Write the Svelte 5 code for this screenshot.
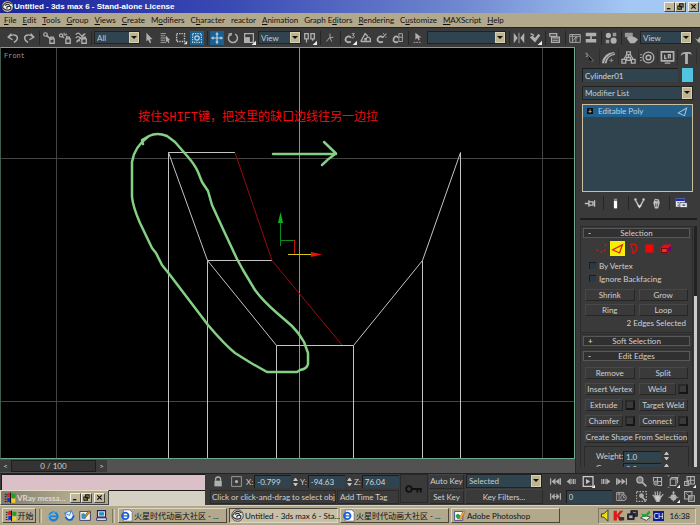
<script>
  const menus = [
    ['', 'F', 'ile'], ['', 'E', 'dit'], ['', 'T', 'ools'], ['', 'G', 'roup'], ['', 'V', 'iews'],
    ['', 'C', 'reate'], ['M', 'o', 'difiers'], ['C', 'h', 'aracter'], ['reactor', '', ''],
    ['', 'A', 'nimation'], ['Graph E', 'd', 'itors'], ['', 'R', 'endering'], ['C', 'u', 'stomize'],
    ['', 'M', 'AXScript'], ['', 'H', 'elp']
  ];

  // inner markup of the 16x16 icons
  const icons = {
    undo: '<path d="M6 3 2.500 7l5 3M3 7c4-4 10-3 10 1 0 2-2 4-4 5" fill="none" stroke="currentColor" stroke-width="1.600"/>',
    redo: '<path d="m10 3 3.500 4-5 3M13 7C9 3 3 4 3 8c0 2 2 4 4 5" fill="none" stroke="currentColor" stroke-width="1.600"/>',
    link: '<circle cx="4" cy="4" r="2" fill="none" stroke="currentColor" stroke-width="1.400"/><path d="m5 5 6 5" stroke="currentColor" stroke-width="1.700"/><path d="M9 9h5v5H9zM10 9V7h3v2" fill="none" stroke="currentColor" stroke-width="1.500"/>',
    unlink: '<circle cx="3.500" cy="5" r="1.800" fill="none" stroke="currentColor" stroke-width="1.400"/><path d="m5 6 2 2M7 2v3M10 3 8 5M11 6H9" stroke="currentColor" stroke-width="1.300"/><path d="M9 9h5v5H9zM10 9V7h3v2" fill="none" stroke="currentColor" stroke-width="1.500"/>',
    bind: '<path d="M2 4q3-3 5 0t6-1M2 8q3-3 5 0t6-1M3 12q2-3 4 0" fill="none" stroke="currentColor" stroke-width="1.500"/><path d="m3 13 9-10" stroke="currentColor" stroke-width="1.400"/><path d="M9 9h5v5H9zM10 9V7h3v2" fill="none" stroke="currentColor" stroke-width="1.500"/>',
    cursor: '<path d="M5 2v10l2-2 2 4 1.500-1L9 9.500h3z" fill="currentColor"/>',
    byname: '<path d="M3 3h6M3 5.500h5M3 8h6M3 10.500h5M3 13h6" stroke="currentColor"/><path d="M9 5v8l1.500-1.500 1.500 2.500 1-1-1-2.500h2z" fill="currentColor"/>',
    region: '<path d="M3 3h9v9H3z" fill="none" stroke="#ccc" stroke-width="1.600" stroke-dasharray="1.500 1.300"/><path d="M15 11v4h-4z" fill="#ddd"/>',
    window: '<path d="M3 3h10v10H3z" fill="none" stroke="currentColor" stroke-width="1.400" stroke-dasharray="1.500 1.200"/><circle cx="8" cy="8" r="2.500" fill="none" stroke="currentColor" stroke-width="1.400"/>',
    move: '<path d="M8 1 6 4h4zM8 15l-2-3h4zM1 8l3-2v4zM15 8l-3-2v4zM7.300 4h1.400v8H7.300zM4 7.300h8v1.400H4z" fill="currentColor"/>',
    rotate: '<path d="M10.500 3.500a5.200 5.200 0 1 1-6 .6" fill="none" stroke="currentColor" stroke-width="1.700"/><path d="m2 3 5-1-1 4z" fill="currentColor"/>',
    scale: '<path d="M3 3h10v10H3z" fill="none" stroke="currentColor" stroke-width="1.400"/><path d="M3 7h6v6H3z" fill="currentColor"/><path d="M16 11v5h-5z" fill="#eee"/>',
    pivot: '<path d="M2 3h4v6H2zM9 3h4v6H9z" fill="none" stroke="currentColor" stroke-width="1.500"/><path d="M4 9v4M11 9v2" stroke="currentColor" stroke-width="1.500"/><path d="M16 11v5h-5z" fill="#eee"/>',
    manip: '<path d="m4 12 3-4 5-1M8 3v5l2 4" fill="none" stroke="currentColor"/>',
    snap3: '<path d="M9 12c-3 2-7 0-6-3s5-4 6-1" fill="none" stroke="currentColor" stroke-width="2"/><path d="M10 3h3l-2 2q2 0 2 1.500T10 8" fill="none" stroke="currentColor"/><path d="M16 11v5h-5z" fill="#eee"/>',
    snapA: '<path d="m2 12 5-9 3 3M2 12h11V9q-3-4-5 0" fill="none" stroke="currentColor" stroke-width="1.500"/><path d="M6 8h3v3H6z" fill="currentColor"/>',
    snapP: '<path d="M9 12c-3 2-7 0-6-3s5-4 6-1" fill="none" stroke="currentColor" stroke-width="2"/><path d="m9 7 4-4M9 3h1M12 7h1" stroke="currentColor" stroke-width="1.300"/>',
    snapS: '<path d="M8 12c-3 2-6 0-5-3s4-4 5-1" fill="none" stroke="currentColor" stroke-width="2"/><path d="M9 3h4v9H9zM9 7h4" fill="none" stroke="currentColor"/>',
    named: '<path d="M5 2v8l2-2 2 3 1-1-1-2.500h3z" fill="currentColor"/><path d="M3 13h9" stroke="currentColor" stroke-dasharray="2 1"/>',
    mirror: '<path d="M2 2v12l4.500-6zM14 2v12L9.500 8z" fill="currentColor"/><path d="M8 2v12" stroke="currentColor"/>',
    align: '<path d="m2 7 3-2 3 3 4-5 2 2-6 8z" fill="currentColor"/><path d="m3 3 4 2" stroke="currentColor" stroke-width="1.500"/><path d="M16 11v5h-5z" fill="#eee"/>',
    layers: '<path d="M2 3h8v3H2zM4 7h9v6H4z" fill="none" stroke="currentColor" stroke-width="1.400"/><path d="M5 9h7M5 11h7" stroke="currentColor"/>',
    curve: '<path d="M2 4h12v9H2zM2 6h12M5 4v9M9 6v7" fill="none" stroke="currentColor"/><path d="M6 11q2-5 5-3" fill="none" stroke="currentColor"/>',
    schem: '<path d="M2 2h12v4H2zM2 9h12v4H2z" fill="currentColor"/><path d="M8 6v3" stroke="currentColor" stroke-width="2"/>',
    material: '<circle cx="5" cy="5" r="3" fill="currentColor"/><path d="M10 2h4v4h-4zM2 10h4v4H2z" fill="currentColor" opacity=".8"/><circle cx="11" cy="11" r="3.500" fill="currentColor"/>',
    teapot: '<path d="M1 2h9v5H1z" fill="currentColor" opacity=".8"/><path d="M3 8q5-4 11 0l2 2-4 4H7z" fill="currentColor"/>',
    quick: '<path d="m1 8 3 2 4-5 5 3-3 5H5z" fill="currentColor"/>',
    create: '<path d="m4 3 8 9M6 6l5 6M4 7l3-1" stroke="#858585" stroke-width="1.500"/><path d="m6 5 6 7-4-1z" fill="#111"/>',
    modify: '<path d="M1 14Q2 3 14 2l1 3Q7 6 6 14z" fill="currentColor"/><path d="M3.500 14Q5 6 14 3.500" fill="none" stroke="#555"/><path d="M11 9v4M9 11h4" stroke="#999"/>',
    hier: '<path d="M6 2h4v3H6zM1 10h4v4H1zM11 10h4v4h-4zM6 8h4v3H6z" fill="none" stroke="currentColor" stroke-width="1.400"/><path d="m6 5-3 5M10 5l3 5M8 5v3" stroke="currentColor" stroke-width="1.300"/>',
    motion: '<circle cx="9" cy="8" r="5.800" fill="none" stroke="currentColor" stroke-width="1.300"/><circle cx="9" cy="8" r="2.500" fill="none" stroke="currentColor" stroke-width="1.600"/><path d="M0 5h2M0 8h2M0 11h2" stroke="currentColor"/>',
    display: '<path d="M1.500 2h13v9.500h-13z" fill="#333" stroke="currentColor" stroke-width="1.800"/><path d="M5 14h6M5 5v4h2M9 9V5h2v4" fill="none" stroke="currentColor" stroke-width="1.500"/>',
    hammer: '<path d="M2 5q1-3 5-3h5l2 3-3-1H9.500v11h-3V4Q4 4 2 6z" fill="currentColor"/>',
    pin: '<path d="M1 8h5M6 4v8M6 6h5v4H6M13 4v8" fill="none" stroke="currentColor" stroke-width="1.600"/>',
    tube: '<path d="M6 2h4v3H6z" fill="#888"/><path d="M6 5h4v9H6z" fill="#fff"/>',
    unique: '<path d="m3 4 4 7M13 4 9 11" stroke="currentColor" stroke-width="1.800"/><path d="M5 10h6l-3 4z" fill="#ddd"/><circle cx="3" cy="3" r="1.600" fill="currentColor"/><circle cx="13" cy="3" r="1.600" fill="currentColor"/>',
    trash: '<path d="m6 2 5 1 1 4H4zM4 7h8l-2 7H6z" fill="currentColor"/><path d="M7 8v4M9 8v4M6 4l4 1" stroke="#444"/>',
    config: '<path d="M1 2h11v10H1z" fill="#eee"/><path d="M1 2h11v3H1z" fill="#1a2cc8"/><path d="M3 7h2M3 10h2" stroke="#222"/><path d="M6 7h9v6H6z" fill="#fff" stroke="#335"/><path d="M8 10h5M11 8.500v3" stroke="#335"/>',
    vertex: '<g fill="#e01010"><circle cx="3" cy="10" r="1.200"/><circle cx="8" cy="12" r="1.200"/><circle cx="13" cy="4" r="1.200"/><circle cx="12" cy="10" r="1.200"/></g>',
    edge: '<path d="m2 9.500 12-6-3.500 10z" fill="none" stroke="#e02010" stroke-width="1.600"/>',
    border: '<path d="M5 3q7-1.500 7 4 0 6-5 7-1-2 1-3-3-3-3-8z" fill="none" stroke="#e01010" stroke-width="1.500"/>',
    poly: '<path d="M3 3h10v10H3z" fill="#f00808"/>',
    element: '<path d="m2 7 4-4h9v6l-3 4H2z" fill="#e01010"/><path d="M3 8h7v5H3z" fill="#f03030" stroke="#600"/><path d="m11 8 4-4v5l-3 4z" fill="#607"/>',
    lock: '<path d="M3 7h9v7H3z" fill="currentColor"/><path d="M4.500 7V4q3-3 6 0v3" fill="none" stroke="currentColor" stroke-width="1.600"/>',
    center: '<path d="M2 2h12v12H2z" fill="none" stroke="currentColor"/><circle cx="8" cy="8" r="2" fill="currentColor"/>',
    key: '<circle cx="3.500" cy="8" r="2.500" fill="none" stroke="#111" stroke-width="1.600"/><path d="M6 8h9M11 8v3M14 8v3" stroke="#111" stroke-width="1.700"/>',
    first: '<path d="M2 4v8M14 4v8" stroke="currentColor" stroke-width="1.500"/><path d="M8 4v8L3 8zM13 4v8L8 8z" fill="currentColor"/>',
    prev: '<path d="M7 4v8L2 8z" fill="currentColor"/><path d="M8.500 5v6M10.500 5v6M12.500 5v6" stroke="currentColor" stroke-width="1.300"/>',
    play: '<path d="M1.500 2h12v12h-12z" fill="none" stroke="#ccc" stroke-width="1.500"/><path d="M5 5v6l5-3z" fill="#ccc"/><path d="M16 12v4h-4z" fill="#eee"/>',
    next: '<path d="M9 4v8l5-4z" fill="currentColor"/><path d="M7.500 5v6M5.500 5v6M3.500 5v6" stroke="currentColor" stroke-width="1.300"/>',
    last: '<path d="M2 4v8M14 4v8" stroke="currentColor" stroke-width="1.500"/><path d="M8 4v8l5-4zM3 4v8l5-4z" fill="currentColor"/>',
    keymode: '<path d="M2 4v8M14 4v8" stroke="currentColor" stroke-width="1.500"/><path d="M3 8l4-4v8zM13 8 9 4v8z" fill="currentColor"/><path d="M6 8h4" stroke="currentColor"/>',
    timecfg: '<path d="M2 3h9v10H2zM2 5h9M5 3v10" fill="none" stroke="currentColor"/><circle cx="10.500" cy="9.500" r="3.500" fill="#444" stroke="currentColor"/><path d="M10.500 7.500v2h2" fill="none" stroke="currentColor"/>',
    zoom: '<circle cx="6" cy="6" r="3.800" fill="#777" stroke="currentColor" stroke-width="1.500"/><path d="m9 9 5 5" stroke="currentColor" stroke-width="2"/>',
    zoomall: '<path d="M3 8V3h10v10H8M8 3v8M4 8h9" fill="none" stroke="currentColor" stroke-width="1.300"/><circle cx="6" cy="10" r="2.600" fill="#777" stroke="currentColor"/>',
    extents: '<path d="M4 5h7v8H4zM4 5l2-2h7l-2 2M13 3v7" fill="none" stroke="currentColor" stroke-width="1.300"/><path d="M1 1h2M1 15h2M15 1h-1" stroke="currentColor"/><path d="M16 12v4h-4z" fill="#eee"/>',
    extall: '<path d="M5 2h9v9H5zM9.500 2v9M5 6.500h9M2 8v5h5V8z" fill="none" stroke="currentColor" stroke-width="1.300"/><path d="M16 12v4h-4z" fill="#eee"/>',
    zregion: '<path d="M2 2h12v12H2z" fill="none" stroke="currentColor" stroke-width="1.300" stroke-dasharray="2 1.500"/><circle cx="8" cy="7" r="3" fill="#aaa"/><path d="m9 9 4 4" stroke="currentColor" stroke-width="2"/>',
    pan: '<path d="M4 8 2 6M5.500 7 5 2M8 7V1.500M10.500 7l1-5M12 9l3-4M4 8l1-1h6l1 2-2 5H7z" fill="#ccc" stroke="currentColor" stroke-width="1.500"/>',
    arc: '<path d="M2 9h12M8 3v11" stroke="currentColor" stroke-width="1.200"/><circle cx="8" cy="9" r="3.800" fill="currentColor"/><path d="m8 1 2 3H6z" fill="currentColor"/><path d="M16 12v4h-4z" fill="#eee"/>',
    minmax: '<path d="M2 2h9v9H2zM7 7h7v7H7z" fill="none" stroke="currentColor" stroke-width="1.300"/><path d="m4 4 5 5M9 6v3H6" fill="none" stroke="currentColor"/>',
    max: '<circle cx="8" cy="8" r="7" fill="#eee" stroke="#222"/><path d="M13 5Q8 1 4 5t0 6q4 3 8 0V8H8q-2 2 0 2M5 7q3-3 6 0" fill="none" stroke="#333" stroke-width="1.500"/>',
    win: '<path d="M4 3q2-1.500 4 0v5Q6 6.500 4 8z" fill="#e02020"/><path d="M9 3q3 1 5 0v5q-2 1-5 0z" fill="#20a020"/><path d="M4 9q2-1.500 4 0v5q-2-1.500-4 0z" fill="#2030d0"/><path d="M9 9q3 1 5 0v5q-2 1-5 0z" fill="#f0d020"/><path d="M1 4h2M1 7h2M1 10h2M1 13h2M3 5h1M8 2v13" stroke="#111" stroke-width="1.200"/>',
    ie: '<circle cx="8" cy="9" r="5" fill="none" stroke="#1a7fd8" stroke-width="2.600"/><path d="M4 9h9" stroke="#1a7fd8" stroke-width="2"/><path d="M1 14Q0 9 9 4q5-3 6 0" fill="none" stroke="#58b8f0" stroke-width="1.300"/>',
    outlook: '<path d="m2 5 8-3 4 8-8 4z" fill="#e8f4ff" stroke="#2878d0"/><path d="m2 5 6 3 2-6" fill="none" stroke="#2878d0"/><path d="M3 10q3 5 8 3l2-5" fill="none" stroke="#1860c8" stroke-width="2"/>',
    desk: '<path d="M1 3h13v11H1z" fill="#f4f4e0" stroke="#226"/><path d="m5 11 7-9 2 1-7 9z" fill="#d89020" stroke="#333" stroke-width=".6"/><path d="M3 6q3-2 5 1v5H3z" fill="#3a90b8"/>',
    pc: '<path d="M3 2h10v8H3z" fill="#dde" stroke="#225" stroke-width="1.300"/><path d="M5 4h6v4H5z" fill="#1890d8"/><path d="M2 11h12v3H2z" fill="#eee" stroke="#225"/>',
    page: '<path d="M4 1h8l3 3v11H4z" fill="#fff" stroke="#667"/><circle cx="6.500" cy="8.500" r="4" fill="none" stroke="#1a60d8" stroke-width="2.200"/><path d="M3 8.500h7" stroke="#1a60d8" stroke-width="1.500"/>',
    ps: '<path d="M2 3h10v11H2z" fill="#fff" stroke="#338"/><path d="M3 9q2-5 5-2t-2 6z" fill="#2ba04a"/><path d="m7 12 6-10 2 1-5 10z" fill="#f0b020" stroke="#a44" stroke-width=".6"/>',
    speaker: '<path d="M3 6h3l5-5v14L6 10H3z" fill="#f0e020" stroke="#222"/>',
    kav: '<path d="M2 2h4v5l4-5h4l-5 6 4 6H9L6 9v5H2z" fill="#e01818"/><path d="M9 10h6v4H9z" fill="#333"/>',
    net: '<path d="M6 2h8v7H6zM2 6h8v7H2z" fill="#334" stroke="#111"/><path d="M4 8h4v3H4zM9 4h3v1H9z" fill="#aac"/>',
    eject: '<path d="m2 11 5-3 7 2-5 4z" fill="#eee" stroke="#333"/><path d="M3 5q5 4 9-3l2 2q-5 8-10 5z" fill="#20a030"/>'
  };

  const grid = { v: [56, 542], h: [158, 401] };

  const toolbar = [
    ['undo', 'redo'], ['link', 'unlink', 'bind'],
    [{ options: ['All', 'Geometry', 'Shapes'], label: 'Selection filter', size: 'filter' }, 'cursor', 'byname', 'region', 'window*'],
    ['move*', 'rotate', 'scale', { options: ['View', 'Screen', 'World'], label: 'Coordinate system', size: 'coord' }, 'pivot'],
    ['manip'], ['snap3', 'snapA', 'snapP', 'snapS'],
    ['named', { options: [''], label: 'Named selection sets', size: 'sets' }],
    ['mirror', 'align'], ['layers'], ['curve', 'schem'], ['material'],
    ['teapot', { options: ['View', 'Selected'], label: 'Render type', size: 'render' }, 'quick']
  ];

  const tabs = ['create', 'modify', 'hier', 'motion', 'display', 'hammer'];
  const levels = ['vertex', 'edge', 'border', 'poly', 'element'];
  const edits = [
    { t: 'Remove' }, { t: 'Split' },
    { t: 'Insert Vertex' }, { t: 'Weld', box: true },
    { t: 'Extrude', box: true }, { t: 'Target Weld' },
    { t: 'Chamfer', box: true }, { t: 'Connect', box: true }
  ];
  const playback = ['first', 'prev', 'play', 'next', 'last'];
  const nav = ['zoom', 'zoomall', 'extents', 'extall', 'zregion', 'pan', 'arc', 'minmax'];
  const coords = [['X:', '-0.799'], ['Y:', '-94.63'], ['Z:', '76.04']];
  const tasks = [
    { icon: 'page', t: '火星时代动画大社区 - ...' },
    { icon: 'max', t: 'Untitled - 3ds max 6 - Sta...', on: true },
    { icon: 'page', t: '火星时代动画大社区 - ...' },
    { icon: 'ps', t: 'Adobe Photoshop' }
  ];

  let level = $state('edge');
  let byVertex = $state(false);
  let ignoreBack = $state(false);
</script>

{#snippet icon(name)}
  <svg class="icon" viewBox="0 0 16 16" aria-hidden="true">{@html icons[name]}</svg>
{/snippet}

{#snippet combo(options, label, size)}
  <span class="combo {size}">
    <select aria-label={label}>
      {#each options as o}<option>{o}</option>{/each}
    </select>
    <i></i>
  </span>
{/snippet}

{#snippet winButtons()}
  <button aria-label="Minimize"><svg viewBox="0 0 8 8"><path d="M1 6.500h4" stroke="#111" stroke-width="1.500" /></svg></button>
  <button aria-label="Restore"><svg viewBox="0 0 8 8"><path d="M3 1h4v3.500H3zM1 3.500h4V7H1z" fill="none" stroke="#111" stroke-width="1.200" /></svg></button>
  <button class="close" aria-label="Close"><svg viewBox="0 0 8 8"><path d="m1.500 1.500 5 5M6.500 1.500l-5 5" stroke="#111" stroke-width="1.400" /></svg></button>
{/snippet}

<div class="app">
  <header class="title">
    {@render icon('max')}
    <h1>Untitled - 3ds max 6 - Stand-alone License</h1>
    <div class="winbtns">{@render winButtons()}</div>
  </header>

  <nav class="menu">
    {#each menus as [a, u, b]}
      <a href="#menu">{a}<u>{u}</u>{b}</a>
    {/each}
  </nav>

  <div class="toolbar">
    {#each toolbar as group, i}
      {#if i > 0}<span class="sep"></span>{/if}
      {#each group as item}
        {#if typeof item === 'string'}
          <button class="tool" class:on={item.endsWith('*')} aria-label={item.replace('*', '')}>
            {@render icon(item.replace('*', ''))}
          </button>
        {:else}
          {@render combo(item.options, item.label, item.size)}
        {/if}
      {/each}
    {/each}
  </div>

  <main>
    <section class="left">
      <div class="viewport">
        <svg viewBox="1 48 573 410" preserveAspectRatio="xMinYMin slice">
          <g class="grid">
            {#each grid.v as x}<path d="M{x}.5 48v500" />{/each}
            {#each grid.h as y}<path d="M0 {y}.5h800" />{/each}
          </g>
          <path class="axis" d="M299.500 48v500" />
          <g class="mesh">
            <path d="M168.500 548V152.500H235M168.500 152.500 207.500 260.500V548M207.500 260.500H272M207.500 260.500 276.500 345.500V548M276.500 345.500H353.500V548M353.500 345.500 422.500 260.500V548M422.500 260.500 460.500 152.500V548" />
          </g>
          <path class="picked" d="M235 152.500 272 260.500 342 345" />
          <g class="gizmo">
            <path d="M280.500 246V222M280.500 240.500H294" stroke="#0a8a1a" />
            <path d="M280.500 212l2.500 11h-5z" fill="#10b020" />
            <path d="M294.500 240v14" stroke="#c01010" />
            <path d="M288 254.500h24" stroke="#d8c818" />
            <path d="M322 254.500l-11 2.500v-5z" fill="#f01010" />
          </g>
          <g class="marker">
            <path d="M143 144 142 140 149 136Q157 132 167 136L175 142 188 157Q195 165 198 172L202 182 208 191 212 205 223 229 237 259 243 270 255 290Q263 301 277 313L292 326Q299 333 304 342L308 353V364Q307 369 300 370L297 372H267L251 363 235 353Q224 344 208 325L170 275 162 265 156 253 152 248 140 223Q133 207 132 197V162Q134 147 149 136" />
            <path d="M273 154H336M324 142 336 153.500Q329 158 322 165" />
          </g>
          <text class="label" x="4" y="58">Front</text>
          <text class="note" x="138" y="121">按住SHIFT键，把这里的缺口边线往另一边拉</text>
        </svg>
      </div>
      <div class="timeline">
        <button aria-label="Previous frame">&lt;</button>
        <button class="slider">0 / 100</button>
        <button aria-label="Next frame">&gt;</button>
      </div>
    </section>

    <aside>
      <div class="tabs">
        {#each tabs as t}<button aria-label={t}>{@render icon(t)}</button>{/each}
      </div>
      <div class="objname">
        <input aria-label="Object name" value="Cylinder01" />
        <button class="swatch" aria-label="Object colour"></button>
      </div>
      {@render combo(['Modifier List'], 'Modifier list', 'mods')}
      <div class="stack">
        <div class="stackrow"><b>+</b><span>Editable Poly</span>
          <svg viewBox="0 0 16 16"><path d="m2 10 12-7-3 11z" fill="none" stroke="#a8c4d8" stroke-width="1.500" /></svg>
        </div>
      </div>
      <div class="stacktools">
        <button aria-label="Pin stack">{@render icon('pin')}</button><span class="sep"></span>
        <button aria-label="Show end result">{@render icon('tube')}</button><span class="sep"></span>
        <button aria-label="Make unique">{@render icon('unique')}</button>
        <button aria-label="Remove modifier">{@render icon('trash')}</button><span class="sep"></span>
        <button aria-label="Configure sets">{@render icon('config')}</button>
      </div>

      <div class="scroller">
        <div class="rollouts">
          <section class="rollout">
            <h2><i>-</i>Selection</h2>
            <div class="levels">
              {#each levels as l}
                <button class:active={level === l} aria-label={l} onclick={() => (level = l)}>{@render icon(l)}</button>
              {/each}
            </div>
            <label class="check"><input type="checkbox" bind:checked={byVertex} />By Vertex</label>
            <label class="check"><input type="checkbox" bind:checked={ignoreBack} />Ignore Backfacing</label>
            <div class="pair">
              <button>Shrink</button><button>Grow</button>
              <button>Ring</button><button>Loop</button>
            </div>
            <p>2 Edges Selected</p>
          </section>
          <section class="rollout"><h2><i>+</i>Soft Selection</h2></section>
          <section class="rollout edges">
            <h2><i>-</i>Edit Edges</h2>
            <div class="pair">
              {#each edits as e}
                <div class="cell">
                  <button>{e.t}</button>
                  {#if e.box}<button class="opt" aria-label="{e.t} settings"></button>{/if}
                </div>
              {/each}
            </div>
            <button class="wide">Create Shape From Selection</button>
            <div class="weights">
              <label>Weight:<input value="1.0" /><span class="spin"></span></label>
              <label>Crease:<input value="0.0" /><span class="spin"></span></label>
            </div>
          </section>
        </div>
        <div class="track"><span></span></div>
      </div>
    </aside>
  </main>

  <footer class="status">
    <div class="listener">
      <input class="pink" aria-label="Macro recorder" />
      <input class="script" aria-label="Script listener" />
      <div class="vray">
        {@render icon('win')}<span>VRay messa...</span>
        <div class="winbtns">{@render winButtons()}</div>
      </div>
    </div>
    <div class="info">
      <div class="coords">
        <button aria-label="Selection lock">{@render icon('lock')}</button>
        <button aria-label="Transform type-in">{@render icon('center')}</button>
        {#each coords as [axis, value], i}
          <label>{axis}<input {value} /></label>
          {#if i < 2}<span class="spin"></span>{/if}
        {/each}
      </div>
      <div class="prompt"><span>Click or click-and-drag to select obj</span><button>Add Time Tag</button></div>
    </div>
    <button class="setkeys" aria-label="Set keys">{@render icon('key')}</button>
    <div class="autokey"><button>Auto Key</button><button>Set Key</button></div>
    <div class="filters">
      {@render combo(['Selected'], 'Key selection', 'keysel')}
      <button>Key Filters...</button>
    </div>
    <div class="play">
      <div>{#each playback as p}<button aria-label={p}>{@render icon(p)}</button>{/each}</div>
      <div>
        <button aria-label="Key mode">{@render icon('keymode')}</button>
        <input aria-label="Current frame" value="0" />
        <button aria-label="Time configuration">{@render icon('timecfg')}</button>
      </div>
    </div>
    <div class="navs">
      {#each nav as n}<button aria-label={n}>{@render icon(n)}</button>{/each}
    </div>
  </footer>

  <div class="taskbar">
    <button class="start">{@render icon('win')}开始</button>
    <span class="grip"></span>
    <div class="quick">
      {#each ['ie', 'outlook', 'desk', 'pc'] as q}<button aria-label={q}>{@render icon(q)}</button>{/each}
    </div>
    <span class="grip"></span>
    <div class="tasks">
      {#each tasks as t}
        <button class:on={t.on}>{@render icon(t.icon)}<span>{t.t}</span></button>
      {/each}
    </div>
    <div class="tray">
      {#each ['speaker', 'kav', 'net', 'eject'] as q}{@render icon(q)}{/each}
      <b>CH</b><time>16:38</time>
    </div>
  </div>
</div>

<style>
  :global(body) {
    background: #3a3a3a;
  }

  .app {
    --line: #262626;
    --field: #30444f;
    --beige: #b2a88c;
    height: 100vh;
    display: flex;
    flex-direction: column;
    overflow: hidden;
    background: #3a3a3a;
    color: #d0d0d0;
    font-family: Lato, "Noto Sans CJK SC", sans-serif;
    font-size: 8px;
    line-height: 10px;
    white-space: nowrap;
  }

  .app * {
    box-sizing: border-box;
  }

  h1, h2, p {
    margin: 0;
    font-size: 8px;
  }

  button, input, select {
    margin: 0;
    padding: 0;
    border: 0;
    border-radius: 0;
    background: none;
    color: inherit;
    font: inherit;
    min-width: 0;
  }

  button {
    display: flex;
    align-items: center;
    justify-content: center;
    white-space: nowrap;
  }

  input {
    background: var(--field);
    border-top: 1px solid #1c1c1c;
    border-left: 1px solid #1c1c1c;
    padding-left: 2px;
    color: #d0d8dc;
  }

  .icon {
    display: block;
    flex: none;
    width: 13px;
    height: 13px;
    color: #b0b0b0;
  }

  .sep {
    flex: none;
    width: 1px;
    height: 14px;
    margin: 0 1px 0 2px;
    background: var(--line);
  }

  .combo {
    position: relative;
    display: block;
    flex: none;
    height: 14px;
    margin: 0 1px;
    background: var(--field);
    border: 1px solid #222;
  }

  .combo select {
    width: 100%;
    height: 100%;
    appearance: none;
    display: block;
    padding-left: 2px;
    color: #c4ccd0;
  }

  .combo i {
    position: absolute;
    top: 0;
    right: 0;
    bottom: 0;
    width: 10px;
    background: #bdb592;
    border: 1px solid #d8d0b0;
    pointer-events: none;
  }

  .combo i::after {
    content: "";
    position: absolute;
    left: 1px;
    top: 3px;
    border: 3px solid transparent;
    border-top-color: #111;
    border-bottom: 0;
  }

  .filter { width: 46px; }
  .coord { width: 43px; }
  .sets { width: 79px; }
  .render { width: 52px; }

  .title {
    display: flex;
    align-items: center;
    flex: none;
    height: 13px;
    padding: 0 1px;
    background: linear-gradient(90deg, #1c249c, #3a4ab4 33%, #7088d0 66%, #a4c8f4 90%);
    color: #fff;
  }

  .title h1 {
    flex: 1;
    font-family: "Liberation Sans", sans-serif;
    font-weight: bold;
  }

  .winbtns {
    display: flex;
  }

  .winbtns button {
    width: 11px;
    height: 10px;
    background: #c0b898;
    border: 1px solid;
    border-color: #eee #444 #444 #eee;
  }

  .winbtns .close {
    margin-left: 2px;
  }

  .winbtns svg {
    width: 7px;
    height: 7px;
  }

  .menu {
    display: flex;
    align-items: center;
    flex: none;
    gap: 6px;
    height: 14px;
    padding: 0 4px;
    background: var(--beige);
  }

  .menu a {
    color: #111;
    text-decoration: none;
  }

  .toolbar {
    display: flex;
    align-items: center;
    flex: none;
    height: 20px;
    padding-left: 5px;
    overflow: hidden;
    border-top: 1px solid #222;
  }

  .toolbar .combo {
    height: 13px;
  }

  .tool {
    flex: none;
    width: 16px;
    height: 14px;
  }

  .tool .icon {
    width: 14px;
    height: 14px;
  }

  .tool.on {
    background: linear-gradient(#1c6090, #1c6090) center / 14px 14px no-repeat;
  }

  .tool.on .icon {
    color: #b8d4e8;
  }

  main {
    flex: 1;
    min-height: 0;
    display: grid;
    grid-template-columns: minmax(0, 1fr) 125px;
  }

  .left {
    display: flex;
    flex-direction: column;
    min-height: 0;
  }

  .viewport {
    flex: 1;
    min-height: 0;
    background: #000;
    border: 1px solid #6fa88c;
    border-left-color: #405c4c;
  }

  .viewport svg {
    display: block;
    width: 100%;
    height: 100%;
  }

  .grid path { stroke: #444; }
  .axis { stroke: #909090; }
  .mesh path { fill: none; stroke: #c4c4c4; }
  .picked { fill: none; stroke: #980c10; }

  .marker path {
    fill: none;
    stroke: #84d084;
    stroke-width: 2.5px;
    stroke-linejoin: round;
    stroke-linecap: round;
  }

  .label {
    fill: #9a9a9a;
    font: 7px "Liberation Mono", monospace;
  }

  .note {
    fill: #f00c10;
    font: 12px "Liberation Mono", "Noto Sans CJK SC", monospace;
  }

  .timeline {
    display: flex;
    flex: none;
    height: 14px;
    padding: 1px 0;
    background: #525252;
  }

  .timeline button {
    width: 11px;
    background: #3c3c3c;
  }

  .timeline .slider {
    width: 85px;
    background: #333;
    border: 1px solid #1e1e1e;
  }

  aside {
    display: flex;
    flex-direction: column;
    min-height: 0;
    padding: 2px 3px 6px 4px;
    border-left: 1px solid #2a2a2a;
  }

  aside > .combo, .objname, .stack {
    margin: 0 4px 4px 2px;
  }

  .tabs {
    display: flex;
    flex: none;
    height: 19px;
  }

  .tabs button {
    width: 20px;
    height: 16px;
    border-right: 1px solid #2e2e2e;
  }

  .tabs .icon {
    width: 15px;
    height: 15px;
  }

  .objname {
    display: flex;
    flex: none;
    gap: 4px;
    height: 14px;
  }

  .objname input {
    flex: 1;
  }

  .swatch {
    width: 11px;
    background: #50c4e0;
  }

  aside > .stack {
    flex: none;
    height: 88px;
    margin-bottom: 2px;
    background: var(--field);
    border: 1px solid #c8c0a0;
  }

  .stackrow {
    display: flex;
    align-items: center;
    gap: 5px;
    height: 12px;
    padding: 0 4px;
    background: #24608c;
    color: #bcd0e0;
  }

  .stackrow b {
    width: 6px;
    height: 6px;
    background: #06101c;
    font-size: 7px;
    line-height: 6px;
    text-align: center;
  }

  .stackrow span {
    flex: 1;
  }

  .stackrow svg {
    width: 11px;
    height: 11px;
  }

  .stacktools {
    display: flex;
    align-items: center;
    justify-content: space-between;
    flex: none;
    height: 18px;
    padding: 0 9px 0 4px;
  }

  .stacktools .icon {
    color: #c0c0c0;
  }

  .scroller {
    position: relative;
    flex: 1;
    min-height: 0;
    display: flex;
    gap: 1px;
    margin-top: 6px;
    padding-top: 6px;
    border-top: 2px solid #1e1e1e;
    overflow: hidden;
  }

  .rollouts {
    flex: 1;
    min-width: 0;
    overflow: hidden;
  }

  .track {
    flex: none;
    width: 3px;
    background: #222;
    display: flex;
    align-items: flex-end;
  }

  .track span {
    width: 3px;
    height: 71%;
    background: #ccc;
  }

  .rollout {
    margin-bottom: 1px;
    padding: 1px 2px;
    border: 1px solid #2c2c2c;
  }

  .rollout h2 {
    position: relative;
    height: 10px;
    line-height: 8px;
    font-weight: normal;
    text-align: center;
    background: #303030;
    border: 1px solid #585858;
  }

  .rollout h2 i {
    position: absolute;
    left: 4px;
    font-style: normal;
    font-weight: bold;
  }

  .levels {
    display: flex;
    gap: 1px;
    padding: 3px 0 3px 11px;
  }

  .levels button {
    width: 15px;
    height: 15px;
  }

  .levels .active {
    background: #f4f000;
  }

  .check {
    display: flex;
    align-items: center;
    gap: 3px;
    height: 13px;
    padding-left: 6px;
  }

  .check input {
    appearance: none;
    width: 7px;
    height: 7px;
    background: #263a48;
  }

  .check input:checked {
    background: #a8c4d8;
  }

  .pair {
    display: grid;
    grid-template-columns: 1fr 1fr;
    gap: 3px 4px;
    padding: 4px 2px 2px;
  }

  .pair button, .wide {
    height: 12px;
    border: 1px solid;
    border-color: #484848 #262626 #262626 #484848;
  }

  .rollout p {
    padding: 0 4px 3px 0;
    text-align: right;
  }

  .edges .pair {
    gap: 4px;
    padding: 6px 2px 4px;
  }

  .cell {
    display: flex;
    gap: 2px;
  }

  .cell button:first-child {
    flex: 1;
  }

  .cell .opt {
    flex: none;
    width: 10px;
    height: 10px;
    align-self: center;
    border-width: 2px;
    border-color: #2a2a2a #161616 #161616 #2a2a2a;
  }

  .wide {
    width: calc(100% - 4px);
    margin: 0 2px;
  }

  .weights {
    margin: 3px 1px 0;
    padding: 3px 0 0 11px;
    border: 1px solid #2a2a2a;
    border-bottom: 0;
  }

  .weights label {
    display: grid;
    grid-template-columns: 27px 38px 10px;
    align-items: center;
    height: 12px;
  }

  .weights input {
    height: 11px;
  }

  .spin {
    display: grid;
    flex: none;
    gap: 2px;
    margin: 0 auto;
    width: 5px;
  }

  .spin::before, .spin::after {
    content: "";
    border: 2px solid transparent;
    border-top: 0;
    border-bottom: 3px solid #c4c4c4;
  }

  .spin::after {
    border-bottom: 0;
    border-top: 3px solid #c4c4c4;
  }

  .status {
    display: flex;
    flex: none;
    gap: 1px;
    height: 32px;
    border-top: 1px solid #222;
  }

  .listener {
    position: relative;
    display: flex;
    flex-direction: column;
    width: 205px;
    margin-right: 4px;
    padding-left: 1px;
  }

  .listener .pink {
    flex: 1;
    width: 100%;
    background: #dcc0c8;
  }

  .listener .script {
    flex: 1;
    width: 100%;
    background: #d4d0c4;
  }

  .vray {
    position: absolute;
    left: 0;
    bottom: 0;
    display: flex;
    align-items: center;
    width: 109px;
    height: 15px;
    padding: 0 3px;
    background: linear-gradient(90deg, #807c70, var(--beige) 65%);
    border: 1px solid;
    border-color: #e4dcc4 #444 #444 #e4dcc4;
    color: #ddd8cc;
    font-weight: bold;
  }

  .vray span {
    flex: 1;
    overflow: hidden;
  }

  .info {
    display: flex;
    flex-direction: column;
    flex: 1;
    min-width: 0;
  }

  .coords {
    display: flex;
    align-items: center;
    flex: 1;
    gap: 2px;
  }

  .coords button {
    width: 16px;
  }

  .coords label {
    display: flex;
    flex: 1;
    align-items: center;
    gap: 1px;
    min-width: 0;
  }

  .coords input {
    flex: 1;
    width: 10px;
    height: 13px;
  }

  .prompt {
    display: flex;
    flex: 1;
    gap: 1px;
    align-items: center;
  }

  .prompt span, .prompt button {
    height: 14px;
    line-height: 12px;
    padding-left: 1px;
    border: 1px solid #2a2a2a;
  }

  .prompt span {
    flex: none;
  }

  .prompt button {
    flex: 1;
    padding-left: 2px;
    justify-content: flex-start;
  }

  .setkeys {
    flex: none;
    width: 28px;
    margin-bottom: 2px;
    border: 1px solid #2a2a2a;
  }

  .setkeys .icon {
    width: 18px;
    height: 18px;
  }

  .autokey, .filters {
    display: flex;
    flex-direction: column;
    flex: none;
    gap: 1px;
    width: 35px;
    padding-bottom: 1px;
  }

  .filters {
    width: 78px;
  }

  .autokey button, .filters button {
    flex: 1;
    border: 1px solid;
    border-color: #444 #2a2a2a #2a2a2a #444;
  }

  .play {
    flex: none;
    width: 86px;
    padding-left: 3px;
  }

  .play div {
    display: flex;
    align-items: center;
    justify-content: space-between;
    height: 15px;
  }

  .play button {
    width: 17px;
  }

  .play input {
    width: 46px;
    height: 13px;
  }

  .navs {
    display: grid;
    flex: none;
    grid-template-columns: repeat(4, 16px);
    grid-template-rows: 15px 15px;
    padding: 0 3px 0 2px;
  }

  .taskbar {
    display: flex;
    align-items: center;
    flex: none;
    gap: 3px;
    height: 20px;
    padding: 0 4px 0 2px;
    background: var(--beige);
    border-top: 1px solid #d8d0b8;
    color: #111;
  }

  .start, .tasks button {
    height: 15px;
    border: 1px solid;
    border-color: #e0d8c0 #4c4638 #4c4638 #e0d8c0;
  }

  .start {
    width: 34px;
  }

  .grip {
    width: 3px;
    height: 14px;
    border-left: 1px solid #807860;
    border-right: 1px solid #d4ccb4;
  }

  .quick {
    display: flex;
  }

  .quick button {
    width: 16px;
  }

  .tasks {
    flex: 1;
    min-width: 0;
    display: flex;
    gap: 2px;
  }

  .tasks button {
    flex: 0 1 109px;
    justify-content: flex-start;
    gap: 1px;
    padding-left: 1px;
  }

  .tasks .on {
    background: #c8c0a8;
    border-color: #4c4638 #e0d8c0 #e0d8c0 #4c4638;
  }

  .tray {
    display: flex;
    align-items: center;
    justify-content: space-between;
    flex: none;
    width: 98px;
    height: 16px;
    padding: 0 5px 0 0;
    border: 1px solid;
    border-color: #807860 #d4ccb4 #d4ccb4 #807860;
  }

  .tray b {
    width: 11px;
    background: #101c90;
    color: #fff;
    font-size: 7px;
    font-weight: normal;
    text-align: center;
  }

  .tray time {
    margin-left: 5px;
  }
</style>
